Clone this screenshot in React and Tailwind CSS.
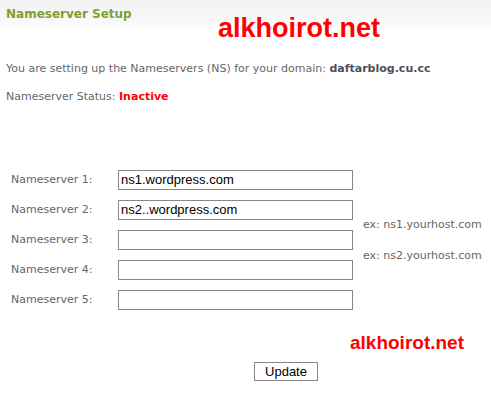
export default function App() {
  const rows = [
    { n: 1, value: "ns1.wordpress.com" },
    { n: 2, value: "ns2..wordpress.com" },
    { n: 3, value: "" },
    { n: 4, value: "" },
    { n: 5, value: "" },
  ];

  return (
    <div className="w-[491px] h-[397px] bg-white overflow-hidden relative" style={{ fontFamily: "Tahoma, 'DejaVu Sans', sans-serif" }}>
      {/* header */}
      <div className="h-[27px] bg-gradient-to-b from-[#f2f2f2] to-[#fbfbfb] px-[6px] pt-[6px]">
        <h2 className="text-[12px] font-bold text-[#7fa02c] leading-[16px]">Nameserver Setup</h2>
      </div>
      <div
        className="absolute left-[218px] top-[13px] text-[27px] font-bold text-[#ff0000] leading-[30px]"
        style={{ fontFamily: "'Liberation Sans', Arial, sans-serif" }}
      >
        alkhoirot.net
      </div>

      <div className="px-[6px] text-[11px] text-[#666] pt-[35px] leading-[14px]">
        <p>
          You are setting up the Nameservers (NS) for your domain: <b className="text-[#4a505c]">daftarblog.cu.cc</b>
        </p>
        <p className="mt-[14px]">
          Nameserver Status: <b className="text-[#ff0000]">Inactive</b>
        </p>
      </div>

      {/* form */}
      <div className="flex mt-[66px]">
        <div className="flex flex-col gap-[10px] pl-[11px]">
          {rows.map((r) => (
            <div key={r.n} className="flex items-center h-[20px]">
              <span className="w-[107px] text-[11px] text-[#666]">Nameserver {r.n}:</span>
              <div
                className="w-[235px] h-[20px] border border-[#888] px-[2px] text-[13px] text-black leading-[18px]"
                style={{ fontFamily: "'Liberation Sans', Arial, sans-serif" }}
              >
                {r.value}
              </div>
            </div>
          ))}
        </div>
        <div className="flex flex-col pl-[10px] pt-[48px] gap-[17px] text-[11px] text-[#666] leading-[14px]">
          <span>ex: ns1.yourhost.com</span>
          <span>ex: ns2.yourhost.com</span>
        </div>
      </div>

      <div
        className="absolute left-[350px] top-[332px] text-[19px] font-bold text-[#ff0000] leading-[22px]"
        style={{ fontFamily: "'Liberation Sans', Arial, sans-serif" }}
      >
        alkhoirot.net
      </div>

      <div className="flex pl-[254px] mt-[52px]">
        <button
          className="w-[64px] h-[19px] border border-[#888] bg-white text-[13px] text-black leading-[17px]"
          style={{ fontFamily: "'Liberation Sans', Arial, sans-serif" }}
        >
          Update
        </button>
      </div>
    </div>
  );
}
